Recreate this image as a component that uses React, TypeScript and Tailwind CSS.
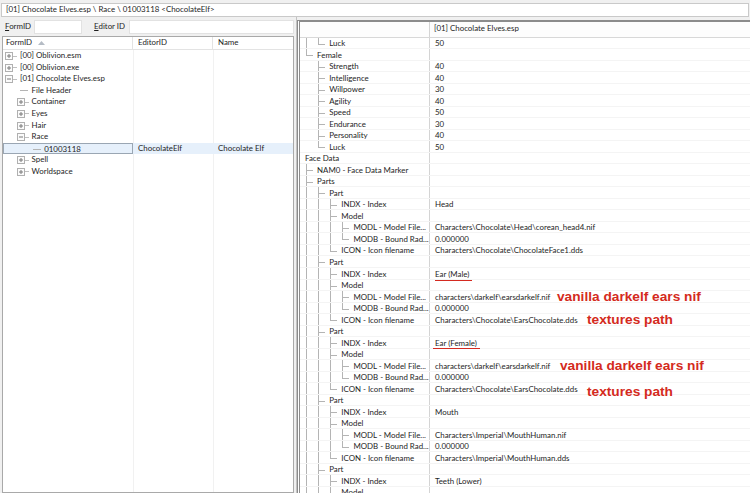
import React from "react";

type Row = {
  t: string;
  l: number;
  v?: string;
  ul?: [number, number, number];
  note?: [string, number, number];
};

const rows: Row[] = [
  { t: "Luck", l: 2, v: "50" },
  { t: "Female", l: 1 },
  { t: "Strength", l: 2, v: "40" },
  { t: "Intelligence", l: 2, v: "40" },
  { t: "Willpower", l: 2, v: "30" },
  { t: "Agility", l: 2, v: "40" },
  { t: "Speed", l: 2, v: "50" },
  { t: "Endurance", l: 2, v: "30" },
  { t: "Personality", l: 2, v: "40" },
  { t: "Luck", l: 2, v: "50" },
  { t: "Face Data", l: 0 },
  { t: "NAM0 - Face Data Marker", l: 1 },
  { t: "Parts", l: 1 },
  { t: "Part", l: 2 },
  { t: "INDX - Index", l: 3, v: "Head" },
  { t: "Model", l: 3 },
  { t: "MODL - Model File...", l: 4, v: "Characters\\Chocolate\\Head\\corean_head4.nif" },
  { t: "MODB - Bound Rad...", l: 4, v: "0.000000" },
  { t: "ICON - Icon filename", l: 3, v: "Characters\\Chocolate\\ChocolateFace1.dds" },
  { t: "Part", l: 2 },
  { t: "INDX - Index", l: 3, v: "Ear (Male)", ul: [5, 37, 6] },
  { t: "Model", l: 3 },
  { t: "MODL - Model File...", l: 4, v: "characters\\darkelf\\earsdarkelf.nif", note: ["vanilla darkelf ears nif", 127, 0] },
  { t: "MODB - Bound Rad...", l: 4, v: "0.000000" },
  { t: "ICON - Icon filename", l: 3, v: "Characters\\Chocolate\\EarsChocolate.dds", note: ["textures path", 157, 0] },
  { t: "Part", l: 2 },
  { t: "INDX - Index", l: 3, v: "Ear (Female)", ul: [3, 47, 5] },
  { t: "Model", l: 3 },
  { t: "MODL - Model File...", l: 4, v: "characters\\darkelf\\earsdarkelf.nif", note: ["vanilla darkelf ears nif", 130, 0] },
  { t: "MODB - Bound Rad...", l: 4, v: "0.000000" },
  { t: "ICON - Icon filename", l: 3, v: "Characters\\Chocolate\\EarsChocolate.dds", note: ["textures path", 157, 3] },
  { t: "Part", l: 2 },
  { t: "INDX - Index", l: 3, v: "Mouth" },
  { t: "Model", l: 3 },
  { t: "MODL - Model File...", l: 4, v: "Characters\\Imperial\\MouthHuman.nif" },
  { t: "MODB - Bound Rad...", l: 4, v: "0.000000" },
  { t: "ICON - Icon filename", l: 3, v: "Characters\\Imperial\\MouthHuman.dds" },
  { t: "Part", l: 2 },
  { t: "INDX - Index", l: 3, v: "Teeth (Lower)" },
  { t: "Model", l: 3 },
];

// the tree continues below the visible area, so an open branch keeps its line
const later = (i: number, k: number) => {
  for (let j = i + 1; j < rows.length; j++) {
    if (rows[j].l < k) return false;
    if (rows[j].l === k) return true;
  }
  return true;
};

type TreeItem = { t: string; l: number; exp?: "+" | "-"; ed?: string; nm?: string; sel?: boolean };

const tree: TreeItem[] = [
  { t: "[00] Oblivion.esm", l: 0, exp: "+" },
  { t: "[00] Oblivion.exe", l: 0, exp: "+" },
  { t: "[01] Chocolate Elves.esp", l: 0, exp: "-" },
  { t: "File Header", l: 1 },
  { t: "Container", l: 1, exp: "+" },
  { t: "Eyes", l: 1, exp: "+" },
  { t: "Hair", l: 1, exp: "+" },
  { t: "Race", l: 1, exp: "-" },
  { t: "01003118", l: 2, ed: "ChocolateElf", nm: "Chocolate Elf", sel: true },
  { t: "Spell", l: 1, exp: "+" },
  { t: "Worldspace", l: 1, exp: "+" },
];

const Expander = ({ open }: { open: boolean }) => (
  <svg width="8" height="8" viewBox="0 0 8 8" className="shrink-0">
    <rect x="0.5" y="0.5" width="7" height="7" fill="#fbfbfb" stroke="#b0b0b0" />
    <path d="M2 4h4" stroke="#7a7a7a" />
    {!open && <path d="M4 2v4" stroke="#7a7a7a" />}
  </svg>
);

const TreeRow = ({ it }: { it: TreeItem }) => {
  const box = 2 + it.l * 12;
  const text = 17 + it.l * 11.6;
  return (
    <div className={`flex h-[11.6px] items-center ${it.sel ? "bg-[#e6f0fb]" : ""}`}>
      <div className={`relative h-full w-[130px] shrink-0 ${it.sel ? "border border-[#9aa6b3]" : ""}`}>
        {it.exp ? (
          <div className="absolute top-[2px] flex items-center" style={{ left: box }}>
            <Expander open={it.exp === "-"} />
            <div className="h-px w-[4px] bg-[#c0c0c0]" />
          </div>
        ) : (
          <div className="absolute top-[5.5px] h-px w-[8px] bg-[#b4b4b4]" style={{ left: box + 3 }} />
        )}
        <span className="absolute top-0 whitespace-nowrap leading-[11px]" style={{ left: text }}>
          {it.t}
        </span>
      </div>
      <div className="w-[80px] shrink-0 pl-[5px] leading-[11px]">{it.ed}</div>
      <div className="flex-1 pl-[5px] leading-[11px]">{it.nm}</div>
    </div>
  );
};

const RecRow = ({ r, i }: { r: Row; i: number }) => {
  const lines: React.ReactNode[] = [];
  for (let k = 1; k < r.l; k++) {
    if (later(i, k))
      lines.push(
        <div key={"v" + k} className="absolute top-0 h-full w-px bg-[#b4b4b4]" style={{ left: 6 + (k - 1) * 12 }} />
      );
  }
  if (r.l > 0) {
    const x = 6 + (r.l - 1) * 12;
    lines.push(
      <div
        key="e"
        className="absolute top-0 w-px bg-[#b4b4b4]"
        style={{ left: x, height: later(i, r.l) ? "100%" : "6px" }}
      />
    );
    lines.push(<div key="h" className="absolute top-[6px] h-px w-[7px] bg-[#b4b4b4]" style={{ left: x }} />);
  }
  return (
    <div className="flex h-[11.53px] shrink-0 border-b border-[#f4f4f4]">
      <div className="relative h-full w-[129px] shrink-0">
        {lines}
        <span className="absolute top-[0.5px] whitespace-nowrap leading-[11px]" style={{ left: 5 + r.l * 12.1 }}>
          {r.t}
        </span>
      </div>
      <div className="relative h-full flex-1 border-l border-[#d4d4d4]">
        <span className="absolute left-[5px] top-[0.5px] whitespace-nowrap leading-[11px]">{r.v}</span>
        {r.ul && (
          <div
            className="absolute h-[1.5px] bg-[#d42a20]"
            style={{ left: r.ul[0], width: r.ul[1], top: 5.7 + r.ul[2] }}
          />
        )}
        {r.note && (
          <span
            className="absolute z-10 whitespace-nowrap font-['Liberation_Sans',Arial,sans-serif] text-[13.7px] font-bold leading-[14px] text-[#d42a20]"
            style={{ left: r.note[1], top: -1 + r.note[2] }}
          >
            {r.note[0]}
          </span>
        )}
      </div>
    </div>
  );
};

export default function App() {
  return (
    <div className="flex h-[493px] w-[750px] flex-col overflow-hidden bg-[#f0f0f0] font-['Lato','Noto_Sans',sans-serif] text-[7.9px] text-[#1e1e1e]">
      <div className="mx-[1px] mt-[3px] flex h-[14px] shrink-0 items-center border border-[#c9c9c9] bg-white px-[4px]">
        [01] Chocolate Elves.esp \ Race \ 01003118 &lt;ChocolateElf&gt;
      </div>
      <div className="flex min-h-0 flex-1">
        <div className="flex w-[294px] shrink-0 flex-col">
          <div className="flex h-[19px] shrink-0 items-center pl-[5px]">
            <span>
              <span className="underline">F</span>ormID
            </span>
            <div className="ml-[3px] h-[14px] w-[48px] border border-[#e2e2e2] bg-white" />
            <span className="ml-[12px]">
              <span className="underline">E</span>ditor ID
            </span>
            <div className="ml-[4px] h-[14px] flex-1 border border-[#e2e2e2] bg-white" />
          </div>
          <div className="relative ml-[2px] flex min-h-0 flex-1 flex-col border border-[#a9a9a9] bg-white">
            <div className="absolute bottom-0 left-[130px] top-0 w-px bg-[#f1f1f1]" />
            <div className="absolute bottom-0 left-[210px] top-0 w-px bg-[#f1f1f1]" />
            <div className="relative flex h-[13px] shrink-0 items-center border-b border-[#e3e3e3] bg-white">
              <div className="flex h-full w-[130px] items-center border-r border-[#e3e3e3] pl-[3px]">
                FormID
                <svg width="7" height="4" viewBox="0 0 7 4" className="ml-[6px]">
                  <path d="M0 4L3.5 0L7 4Z" fill="#b5bcc5" />
                </svg>
              </div>
              <div className="flex h-full w-[80px] items-center border-r border-[#e3e3e3] pl-[5px]">EditorID</div>
              <div className="pl-[5px]">Name</div>
            </div>
            <div className="relative">
              {tree.map((it, i) => (
                <TreeRow key={i} it={it} />
              ))}
            </div>
          </div>
        </div>
        <div className="w-[3px] shrink-0 border-r border-[#c2c2c2]" />
        <div className="relative mt-[3px] flex min-w-0 flex-1 flex-col border-l-[3px] border-t-[2px] border-double border-[#8c8c8c] bg-white">
          <div className="flex h-[15.7px] shrink-0 border-b border-[#d8d8d8] bg-[#fdfdfd]">
            <div className="w-[129px] shrink-0" />
            <div className="flex flex-1 items-center border-l border-[#d4d4d4] pl-[4px]">[01] Chocolate Elves.esp</div>
          </div>
          {rows.map((r, i) => (
            <RecRow key={i} r={r} i={i} />
          ))}
        </div>
      </div>
    </div>
  );
}
